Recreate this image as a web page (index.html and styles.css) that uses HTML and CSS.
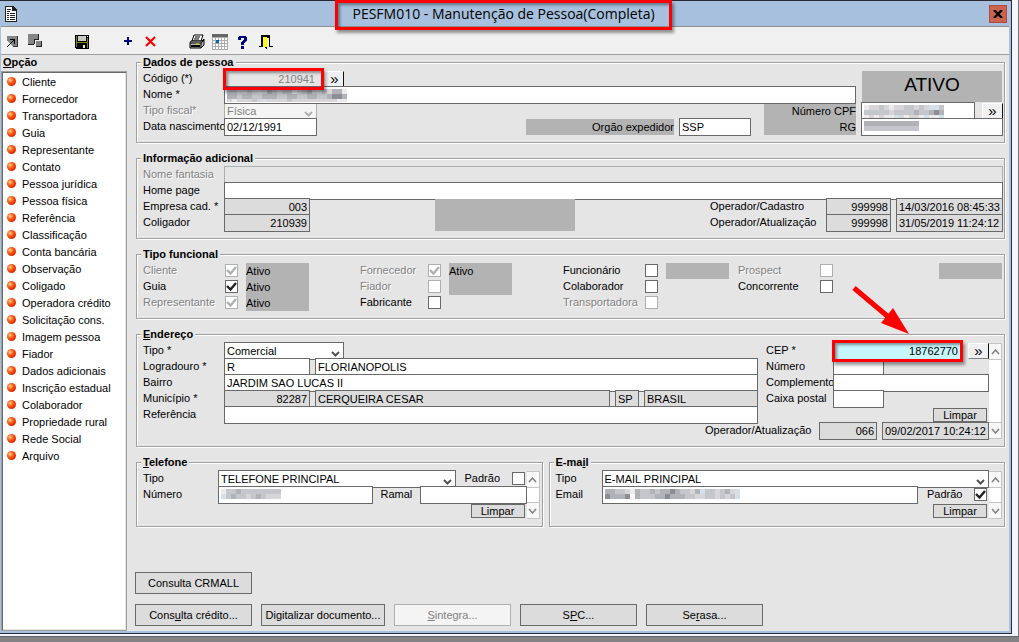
FILE: index.html
```html
<!DOCTYPE html>
<html lang="pt-BR">
<head>
    <meta charset="UTF-8">
    <meta name="viewport" content="width=device-width, initial-scale=1.0">
    <title>PESFM010 - Manutenção de Pessoa(Completa)</title>
    <link rel="stylesheet" href="styles.css">
</head>
<body>
<div class="desktop">
<div class="window">
    <header class="titlebar">
        <svg class="app-icon" width="14" height="16" viewBox="0 0 14 16" shape-rendering="crispEdges">
            <path d="M1 0h8l4 4v12H1z" fill="#222"/>
            <path d="M2 1h6v4h4v10H2z" fill="#fff"/>
            <path d="M3 3h4v1H3zM3 5h3v1H3zM3 7h2v1H3zM6 7h5v1H6zM3 9h2v1H3zM6 9h5v1H6zM3 11h2v1H3zM6 11h5v1H6zM3 13h2v1H3zM6 13h5v1H6z" fill="#222"/>
        </svg>
        <h1 class="title">PESFM010 - Manutenção de Pessoa(Completa)</h1>
        <button class="close" aria-label="Fechar">
            <svg width="10" height="8" viewBox="0 0 10 8"><path d="M1 0l8 8M9 0L1 8" stroke="#000" stroke-width="2.4"/></svg>
        </button>
    </header>

    <nav class="toolbar">
        <div class="tools">
            <button aria-label="Executar">
                <svg width="16" height="16" viewBox="0 0 16 16" shape-rendering="crispEdges">
                    <path d="M2 2h10v10H7L2 7z" fill="#858585"/>
                    <path d="M12 2h1v11H8v-1h4z" fill="#333"/>
                    <path d="M5 5h5v5H9V7H8v1H7v1H6v1H5v1H4v1H3v1H2v-1h1v-1h1v-1h1V9h1V8h1V7h1V6H5z" fill="#000"/>
                </svg>
            </button>
            <button aria-label="Janelas">
                <svg width="16" height="16" viewBox="0 0 16 16" shape-rendering="crispEdges">
                    <path d="M0 0h10v5H6v5H0z" fill="#858585"/>
                    <path d="M10 0h1v6H7v4H6V5h4zM0 10h6v1H0z" fill="#222"/>
                    <path d="M8 7h5v5H8z" fill="#858585"/>
                    <path d="M13 7h1v6H8v-1h5z" fill="#222"/>
                </svg>
            </button>
        </div>
        <div class="tools">
            <button aria-label="Salvar">
                <svg width="16" height="16" viewBox="0 0 16 16" shape-rendering="crispEdges">
                    <path d="M1 1h14v14H2l-1-1z" fill="#000"/>
                    <path d="M2 2h1v11H2zM13 4h1v10h-1zM3 8h10v1H3z" fill="#808000"/>
                    <path d="M4 2h8v5H4z" fill="#c8c8c8"/>
                    <path d="M13 2h1v1h-1z" fill="#fff"/>
                    <path d="M9 11h2v3H9z" fill="#e8e8e8"/>
                </svg>
            </button>
        </div>
        <div class="tools">
            <button aria-label="Novo">
                <svg width="16" height="16" viewBox="0 0 16 16" shape-rendering="crispEdges"><path d="M7 3h2v3h3v2H9v3H7V8H4V6h3z" fill="#000080"/></svg>
            </button>
            <button aria-label="Excluir">
                <svg width="16" height="16" viewBox="0 0 16 16"><path d="M3 3l9 9M12 3l-9 9" stroke="#f00" stroke-width="2.2"/></svg>
            </button>
        </div>
        <div class="tools">
            <button aria-label="Imprimir">
                <svg width="16" height="16" viewBox="0 0 16 16">
                    <path d="M5 1h9l-2 6H3z" fill="#fff" stroke="#000"/>
                    <path d="M6 3h5M5 5h5" stroke="#000"/>
                    <path d="M2 7h11l2-2v6l-3 3H1V9z" fill="#b8b8b8" stroke="#000"/>
                    <path d="M1 9h11v5M12 9l3-3" fill="none" stroke="#000"/>
                    <path d="M2 12h9" stroke="#000" stroke-width="2"/>
                    <path d="M7 10h3" stroke="#dd0"/>
                </svg>
            </button>
            <button aria-label="Calendário">
                <svg width="16" height="16" viewBox="0 0 16 16" shape-rendering="crispEdges">
                    <path d="M0 0h16v16H0z" fill="#aaa"/>
                    <path d="M0 0h16v3H0z" fill="#666"/>
                    <path d="M1 4h2v2H1zM4 4h2v2H4zM7 4h2v2H7zM10 4h2v2h-2zM13 4h2v2h-2zM1 7h2v2H1zM7 7h2v2H7zM10 7h2v2h-2zM13 7h2v2h-2zM1 10h2v2H1zM4 10h2v2H4zM7 10h2v2H7zM10 10h2v2h-2zM13 10h2v2h-2zM1 13h2v2H1zM4 13h2v2H4zM7 13h2v2H7zM10 13h2v2h-2zM13 13h2v2h-2z" fill="#fff"/>
                    <path d="M4 6h3v3H4z" fill="#06a"/>
                </svg>
            </button>
            <button aria-label="Ajuda">
                <svg width="16" height="16" viewBox="0 0 16 16" shape-rendering="crispEdges"><path d="M4 2h7v1h1v4h-1v1h-1v1H9v2H6V8h1V7h1V6h1V4H6v2H3V3h1zM6 12h3v3H6z" fill="#000080"/></svg>
            </button>
            <button aria-label="Sair">
                <svg width="16" height="16" viewBox="0 0 16 16" shape-rendering="crispEdges">
                    <path d="M3 1h9v11h3v1h-4V2H4v11H1v-1h2z" fill="#000"/>
                    <path d="M4 2h7v2H9v11H8v-1H7v-1H4z" fill="#000"/>
                    <path d="M5 3h4v9l-1 2V13H5z" fill="#ff0"/>
                </svg>
            </button>
        </div>
    </nav>

    <div class="client">
        <aside class="sidebar">
            <h2><u>O</u>pção</h2>
            <ul class="options">
                <li><a href="#">Cliente</a></li>
                <li><a href="#">Fornecedor</a></li>
                <li><a href="#">Transportadora</a></li>
                <li><a href="#">Guia</a></li>
                <li><a href="#">Representante</a></li>
                <li><a href="#">Contato</a></li>
                <li><a href="#">Pessoa jurídica</a></li>
                <li><a href="#">Pessoa física</a></li>
                <li><a href="#">Referência</a></li>
                <li><a href="#">Classificação</a></li>
                <li><a href="#">Conta bancária</a></li>
                <li><a href="#">Observação</a></li>
                <li><a href="#">Coligado</a></li>
                <li><a href="#">Operadora crédito</a></li>
                <li><a href="#">Solicitação cons.</a></li>
                <li><a href="#">Imagem pessoa</a></li>
                <li><a href="#">Fiador</a></li>
                <li><a href="#">Dados adicionais</a></li>
                <li><a href="#">Inscrição estadual</a></li>
                <li><a href="#">Colaborador</a></li>
                <li><a href="#">Propriedade rural</a></li>
                <li><a href="#">Rede Social</a></li>
                <li><a href="#">Arquivo</a></li>
            </ul>
        </aside>

        <main class="main">
            <fieldset>
                <legend><u>D</u>ados de pessoa</legend>
                <div class="split person">
                    <div class="grow">
                        <div class="row">
                            <label class="name" for="codigo">Código (*)</label>
                            <span class="marked w-key"><input id="codigo" class="num plain" value="210941" disabled></span>
                            <button class="more">»</button>
                        </div>
                        <div class="row">
                            <label class="name" for="nome">Nome *</label>
                            <span class="masked grow"><input id="nome"><svg class="mosaic" data-rows="ccddcdedbcdccfdcbdecdbbf,bbcbbccbbbccbbccbbccbaab,dfdddcdeddddcdddddddddff"></svg></span>
                        </div>
                        <div class="row">
                            <label class="name off" for="fiscal">Tipo fiscal*</label>
                            <select id="fiscal" class="w-date" disabled><option>Física</option></select>
                            <label class="tag right w-tag" for="cpf">Número CPF</label>
                        </div>
                        <div class="row">
                            <label class="name" for="nasc">Data nascimento</label>
                            <input id="nasc" class="w-date" value="02/12/1991">
                            <label class="tag right w-issuer" for="orgao">Orgão expedidor</label>
                            <input id="orgao" class="w-org" value="SSP">
                            <label class="tag w-tag" for="rg">RG</label>
                        </div>
                    </div>
                    <div class="documents">
                        <div class="status">ATIVO</div>
                        <div class="row">
                            <span class="masked w-cpf"><input id="cpf"><svg class="mosaic" data-rows="fddcdfddccdcdeec,cccccdccccbccbab,fdfdffedfddfeffe"></svg></span>
                            <button class="more wide">»</button>
                        </div>
                        <div class="row">
                            <span class="masked grow"><input id="rg"><svg class="mosaic" data-rows="bbbbbbbbbbb,ccccccccccc"></svg></span>
                        </div>
                    </div>
                </div>
            </fieldset>

            <fieldset>
                <legend>Informação adicional</legend>
                <div class="row">
                    <label class="name off" for="fantasia">Nome fantasia</label>
                    <input id="fantasia" class="grow" disabled>
                </div>
                <div class="row">
                    <label class="name" for="home">Home page</label>
                    <input id="home" class="grow">
                </div>
                <div class="split between">
                    <div>
                        <div class="row">
                            <label class="name" for="empresa">Empresa cad. *</label>
                            <input id="empresa" class="num w-code" value="003" readonly>
                        </div>
                        <div class="row">
                            <label class="name" for="coligador">Coligador</label>
                            <input id="coligador" class="num w-code" value="210939" readonly>
                        </div>
                    </div>
                    <div class="block logo-block"></div>
                    <div>
                        <div class="row spaced">
                            <label class="w-operator" for="opcad">Operador/Cadastro</label>
                            <input id="opcad" class="num w-user" value="999998" readonly>
                            <input class="w-stamp" value="14/03/2016 08:45:33" aria-label="Data do cadastro" readonly>
                        </div>
                        <div class="row spaced">
                            <label class="w-operator" for="opatu">Operador/Atualização</label>
                            <input id="opatu" class="num w-user" value="999998" readonly>
                            <input class="w-stamp" value="31/05/2019 11:24:12" aria-label="Data da atualização" readonly>
                        </div>
                    </div>
                </div>
            </fieldset>

            <fieldset>
                <legend>Tipo funcional</legend>
                <div class="split roles">
                    <div class="role">
                        <div class="checks">
                            <label class="off" for="r1">Cliente</label><input type="checkbox" id="r1" checked disabled>
                            <label for="r2">Guia</label><input type="checkbox" id="r2" checked>
                            <label class="off" for="r3">Representante</label><input type="checkbox" id="r3" checked disabled>
                        </div>
                        <div class="block"><p>Ativo</p><p>Ativo</p><p>Ativo</p></div>
                    </div>
                    <div class="role">
                        <div class="checks narrow">
                            <label class="off" for="r4">Fornecedor</label><input type="checkbox" id="r4" checked disabled>
                            <label class="off" for="r5">Fiador</label><input type="checkbox" id="r5" disabled>
                            <label for="r6">Fabricante</label><input type="checkbox" id="r6">
                        </div>
                        <div class="block"><p>Ativo</p><p></p></div>
                    </div>
                    <div class="role pair">
                        <div class="role">
                            <div class="checks">
                                <label for="r7">Funcionário</label><input type="checkbox" id="r7">
                                <label for="r8">Colaborador</label><input type="checkbox" id="r8">
                                <label class="off" for="r9">Transportadora</label><input type="checkbox" id="r9" disabled>
                            </div>
                            <div class="block"><p></p></div>
                        </div>
                        <div class="role grow">
                            <div class="checks">
                                <label class="off" for="r10">Prospect</label><input type="checkbox" id="r10" disabled>
                                <label for="r11">Concorrente</label><input type="checkbox" id="r11">
                            </div>
                            <div class="block right"><p></p></div>
                        </div>
                    </div>
                </div>
            </fieldset>

            <fieldset>
                <legend><u>E</u>ndereço</legend>
                <div class="split">
                    <div class="grow">
                        <div class="split address">
                            <div class="grow">
                                <div class="row">
                                    <label class="name" for="tipoend">Tipo *</label>
                                    <select id="tipoend" class="w-kind"><option>Comercial</option></select>
                                </div>
                                <div class="row spaced">
                                    <label class="name" for="logr">Logradouro *</label>
                                    <input id="logr" class="w-code" value="R">
                                    <input class="grow" value="FLORIANOPOLIS" aria-label="Nome do logradouro">
                                </div>
                                <div class="row">
                                    <label class="name" for="bairro">Bairro</label>
                                    <input id="bairro" class="grow" value="JARDIM SAO LUCAS II">
                                </div>
                                <div class="row spaced">
                                    <label class="name" for="mun">Município *</label>
                                    <input id="mun" class="num w-code" value="82287" readonly>
                                    <input class="grow" value="CERQUEIRA CESAR" aria-label="Nome do município" readonly>
                                    <input class="w-uf" value="SP" aria-label="UF" readonly>
                                    <input class="w-country" value="BRASIL" aria-label="País" readonly>
                                </div>
                                <div class="row">
                                    <label class="name" for="ref">Referência</label>
                                    <input id="ref" class="grow">
                                </div>
                            </div>
                            <div class="postal">
                                <div class="row">
                                    <label for="cep">CEP *</label>
                                    <span class="marked w-cep">
                                        <input id="cep" class="num focus" value="18762770">
                                        <svg class="arrow" width="62" height="54" viewBox="0 0 62 54">
                                            <path d="M3 3L41 35" stroke="#f00" stroke-width="5"/>
                                            <path d="M58 49L30 38l12-15z" fill="#f00"/>
                                        </svg>
                                    </span>
                                    <button class="more wide right">»</button>
                                </div>
                                <div class="row">
                                    <label for="num">Número</label>
                                    <input id="num" class="w-short">
                                </div>
                                <div class="row">
                                    <label for="compl">Complemento</label>
                                    <input id="compl" class="grow">
                                </div>
                                <div class="row">
                                    <label for="caixa">Caixa postal</label>
                                    <input id="caixa" class="w-short">
                                </div>
                                <div class="row"><button class="clear right">Limpar</button></div>
                            </div>
                        </div>
                        <div class="row spaced">
                            <label class="right w-address-op" for="opend">Operador/Atualização</label>
                            <input id="opend" class="num w-opend" value="066" readonly>
                            <input class="w-stamp" value="09/02/2017 10:24:12" aria-label="Data do endereço" readonly>
                        </div>
                    </div>
                    <div class="scroller">
                        <button aria-label="Endereço anterior"><svg width="9" height="6" viewBox="0 0 9 6"><path d="M1 5l3.5-4L8 5"/></svg></button>
                        <button aria-label="Próximo endereço"><svg width="9" height="6" viewBox="0 0 9 6"><path d="M1 1l3.5 4L8 1"/></svg></button>
                    </div>
                </div>
            </fieldset>

            <div class="contacts">
                <fieldset class="phone">
                    <legend><u>T</u>elefone</legend>
                    <div class="split">
                        <div class="grow">
                            <div class="row">
                                <label for="tipotel">Tipo</label>
                                <select id="tipotel" class="grow"><option>TELEFONE PRINCIPAL</option></select>
                                <label class="after" for="padtel">Padrão</label>
                                <input type="checkbox" id="padtel">
                            </div>
                            <div class="row">
                                <label for="numtel">Número</label>
                                <span class="masked grow"><input id="numtel"><svg class="mosaic" data-rows="fccbcccccccc,ecbccdcbcddd"></svg></span>
                                <label class="ext" for="ramal">Ramal</label>
                                <input id="ramal" class="w-stamp">
                            </div>
                            <div class="row"><button class="clear right">Limpar</button></div>
                        </div>
                        <div class="scroller">
                            <button aria-label="Telefone anterior"><svg width="9" height="6" viewBox="0 0 9 6"><path d="M1 5l3.5-4L8 5"/></svg></button>
                            <button aria-label="Próximo telefone"><svg width="9" height="6" viewBox="0 0 9 6"><path d="M1 1l3.5 4L8 1"/></svg></button>
                        </div>
                    </div>
                </fieldset>

                <fieldset class="email">
                    <legend>E-ma<u>i</u>l</legend>
                    <div class="split">
                        <div class="grow">
                            <div class="row">
                                <label for="tipomail">Tipo</label>
                                <select id="tipomail" class="grow"><option>E-MAIL PRINCIPAL</option></select>
                            </div>
                            <div class="row">
                                <label for="mail">Email</label>
                                <span class="masked grow"><input id="mail"><svg class="mosaic" data-rows="bbccdfbccbcbbabccdbeccdcbde,abbbagbcccbbabbbccddccdcdce"></svg></span>
                                <label class="after" for="padmail">Padrão</label>
                                <input type="checkbox" id="padmail" checked>
                            </div>
                            <div class="row"><button class="clear right">Limpar</button></div>
                        </div>
                        <div class="scroller">
                            <button aria-label="E-mail anterior"><svg width="9" height="6" viewBox="0 0 9 6"><path d="M1 5l3.5-4L8 5"/></svg></button>
                            <button aria-label="Próximo e-mail"><svg width="9" height="6" viewBox="0 0 9 6"><path d="M1 1l3.5 4L8 1"/></svg></button>
                        </div>
                    </div>
                </fieldset>
            </div>

            <div class="actions">
                <div class="action-row">
                    <button>Consulta CRMALL</button>
                </div>
                <div class="action-row">
                    <button>Cons<u>u</u>lta crédito...</button>
                    <button class="long">Di<u>g</u>italizar documento...</button>
                    <button disabled><u>S</u>integra...</button>
                    <button>S<u>P</u>C...</button>
                    <button>Se<u>r</u>asa...</button>
                </div>
            </div>
        </main>
    </div>
</div>
</div>

<script>
    // Draws the hidden personal data as blocks, one letter per 5px cell
    const shades = { a: '#8c8e96', b: '#b1b1b8', c: '#c5c5cc', d: '#d7d5d8', e: '#d3dfe9', f: '#eceaea', g: '#fdf8f3' };

    document.querySelectorAll('.mosaic').forEach(svg => {
        const rows = svg.dataset.rows.split(',');
        svg.setAttribute('width', rows[0].length * 5);
        svg.setAttribute('height', rows.length * 5);
        svg.innerHTML = rows.map((row, y) => [...row].map((cell, x) =>
            `<rect x="${x * 5}" y="${y * 5}" width="5" height="5" fill="${shades[cell]}"/>`
        ).join('')).join('');
    });
</script>
</body>
</html>
```
FILE: styles.css
```css
* {
    box-sizing: border-box;
}
body {
    margin: 0;
    min-height: 100vh;
    display: flex;
    flex-direction: column;
    background: #848284;
    color: #000;
    font-family: "Liberation Sans", Arial, sans-serif;
    font-size: 11px;
}
button, input, select {
    font: inherit;
    color: inherit;
    margin: 0;
    border-radius: 0;
}
.desktop {
    flex: 1;
    display: flex;
    margin-bottom: 5px;
    padding: 0 6px 2px 0;
    background: #f3f6fc;
    border-right: 1px solid #777;
    border-bottom: 1px solid #65636a;
}
.window {
    flex: 1;
    min-width: 0;
    display: flex;
    flex-direction: column;
    background: #a6c0dd;
    border-top: 1px solid #2a2a2e;
    border-right: 1px solid #2a2a38;
    border-bottom: 1px solid #2a2a38;
    padding: 0 2px 2px 1px;
}

/* title bar */
.titlebar {
    height: 26px;
    display: flex;
    align-items: center;
    justify-content: space-between;
    padding: 0 2px 0 3px;
    border-bottom: 1px solid #909090;
}
.title {
    margin: 0;
    position: relative;
    font-family: "Open Sans", "Noto Sans", sans-serif;
    font-size: 14px;
    font-weight: normal;
    line-height: 26px;
}
.title::after, .marked::after {
    content: "";
    position: absolute;
    border: 3px solid #f00;
    box-shadow: 2px 3px 3px rgba(0, 0, 0, 0.4), inset 2px 2px 3px rgba(0, 0, 0, 0.4);
    pointer-events: none;
    z-index: 3;
}
.title::after {
    inset: -1px -17px -3px -17px;
}
.close {
    width: 18px;
    height: 18px;
    padding: 0;
    display: flex;
    align-items: center;
    justify-content: center;
    background: #cb6351;
    border: 1px solid #b14a3c;
}

/* toolbar */
.toolbar {
    position: relative;
    height: 27px;
    display: flex;
    align-items: center;
    gap: 30px;
    padding: 2px 0 0 4px;
    background: #f0f0f0;
    box-shadow: 0 1px #a0a0a0;
}
.tools {
    display: flex;
    gap: 7px;
}
.tools button {
    display: flex;
    padding: 0;
    border: 0;
    background: none;
}

.client {
    flex: 1;
    display: flex;
    background: #e5e5e5;
}

/* option list */
.sidebar {
    width: 126px;
    display: flex;
    flex-direction: column;
}
.sidebar h2 {
    margin: 0;
    padding-left: 2px;
    font-size: 11px;
    line-height: 17px;
}
.options {
    flex: 1;
    margin: 0;
    padding: 1px 0 0;
    list-style: none;
    background: #fff;
    border: 1px solid #a0a0a0;
    box-shadow: inset 1px 1px #696969, inset -1px -1px #e3e3e3;
}
.options li {
    display: flex;
    align-items: center;
    gap: 6px;
    height: 17px;
    padding-left: 5px;
}
.options li::before {
    content: "";
    width: 9px;
    height: 9px;
    border-radius: 50%;
    background: radial-gradient(circle at 35% 35%, #ffe0a0 0, #ff7a30 25%, #f03000 60%, #a02000 100%);
}
.options a {
    color: #000;
    text-decoration: none;
}

/* form groups */
.main {
    flex: 1;
    min-width: 0;
    display: flex;
    flex-direction: column;
    padding: 0 4px 5px 8px;
}
fieldset {
    min-width: 0;
    margin: 0 0 7px 1px;
    padding: 0 1px 8px 6px;
    border: 1px solid #a0a0a0;
    box-shadow: 1px 1px #fff, inset 1px 1px #fff;
}
legend {
    margin-left: -2px;
    padding: 0 2px;
    background: #e5e5e5;
    font-weight: bold;
    line-height: 16px;
}
.split {
    display: flex;
}
.between {
    justify-content: space-between;
}
.grow {
    flex: 1;
    min-width: 0;
}
.right {
    margin-left: auto;
}
/* rows are 16px apart and the 18px fields share their borders */
.row {
    display: flex;
    align-items: flex-start;
    height: 16px;
}
.spaced {
    gap: 5px;
}
.row label, .checks label {
    line-height: 17px;
    white-space: nowrap;
}
.name {
    width: 81px;
}
.spaced .name {
    margin-right: -5px;
}
.off {
    color: #808080;
    text-shadow: 1px 1px #fff;
}
input, select {
    height: 18px;
    padding: 0 2px;
    background-color: #fff;
    border: 1px solid #696969;
    outline: none;
}
input[readonly] {
    background-color: #dcdcdc;
}
input:disabled, select:disabled {
    background-color: #e5e5e5;
    border-color: #acb0b0;
    color: #808080;
    opacity: 1;
}
select {
    appearance: none;
    padding-bottom: 1px;
    background-image: url("data:image/svg+xml,%3Csvg xmlns='http://www.w3.org/2000/svg' width='9' height='6'%3E%3Cpath d='M1 1l3.500 3.500L8 1' fill='none' stroke='%23505050' stroke-width='2'/%3E%3C/svg%3E");
    background-repeat: no-repeat;
    background-position: right 3px bottom 2px;
}
select:disabled {
    background-color: #f4f4f4;
    background-image: url("data:image/svg+xml,%3Csvg xmlns='http://www.w3.org/2000/svg' width='9' height='6'%3E%3Cpath d='M1 1l3.500 3.500L8 1' fill='none' stroke='%23b0b0b0' stroke-width='2'/%3E%3C/svg%3E");
}
.num {
    text-align: right;
}
input[type="checkbox"] {
    appearance: none;
    width: 13px;
    height: 13px;
    margin-top: 2px;
    padding: 0;
}
input[type="checkbox"]:disabled {
    background-color: #fff;
}
input[type="checkbox"]:checked {
    background-image: url("data:image/svg+xml,%3Csvg xmlns='http://www.w3.org/2000/svg' width='11' height='11'%3E%3Cpath d='M1 5l3.500 3.500L10 2' fill='none' stroke='%23202020' stroke-width='2.400'/%3E%3C/svg%3E");
}
input[type="checkbox"]:checked:disabled {
    background-image: url("data:image/svg+xml,%3Csvg xmlns='http://www.w3.org/2000/svg' width='11' height='11'%3E%3Cpath d='M1 5l3.500 3.500L10 2' fill='none' stroke='%23b0b0b0' stroke-width='2.400'/%3E%3C/svg%3E");
}

/* field widths */
.w-key { width: 98px; }
.w-date { width: 93px; }
.w-tag { width: 92px; }
.w-issuer { width: 148px; }
.w-org { width: 72px; }
.w-cpf { width: 114px; }
.w-code { width: 86px; }
.w-operator { width: 111px; }
.w-user { width: 65px; }
.w-stamp { width: 107px; }
.w-kind { width: 120px; }
.w-uf { width: 24px; }
.w-country { width: 114px; }
.w-cep { width: 128px; }
.w-short { width: 51px; }
.w-opend { width: 58px; }
.w-address-op { width: 109px; }

.marked, .masked {
    position: relative;
    display: flex;
    height: 18px;
}
.marked input, .masked input {
    width: 100%;
}
.marked::after {
    inset: -2px -2px -2px -1px;
}
input.plain {
    border-color: #e5e5e5;
    padding-right: 6px;
}
.focus {
    background-color: #c6f7fd;
}
.mosaic {
    position: absolute;
    left: 3px;
    top: 3px;
    max-height: 13px;
}
.arrow {
    position: absolute;
    left: 18px;
    top: -57px;
    z-index: 4;
}
.more {
    width: 19px;
    height: 16px;
    margin-top: 1px;
    margin-left: 3px;
    padding: 0;
    background: #f0f0f0;
    border: 1px solid #fff;
    border-right-color: #111;
    border-bottom-color: #808080;
    font-size: 15px;
    line-height: 10px;
}
.more.wide {
    width: 21px;
    margin-left: auto;
}

/* person */
.person {
    gap: 5px;
}
.documents {
    width: 142px;
}
.tag, .block, .status {
    background: #b3b3b3;
}
.tag {
    height: 16px;
    margin-top: 1px;
    text-align: right;
}
.w-issuer {
    margin-right: 5px;
}
.w-org {
    margin-right: 13px;
}
.status {
    height: 31px;
    margin: 1px 1px 0;
    font-size: 19px;
    line-height: 28px;
    text-align: center;
}
.logo-block {
    width: 140px;
    margin: 1px 10px -1px 0;
}

/* roles */
.roles {
    gap: 51px;
}
.role {
    display: flex;
    align-items: flex-start;
    gap: 8px;
}
.pair {
    flex: 1;
    gap: 9px;
}
.checks {
    display: grid;
    grid-template-columns: 82px 13px;
    grid-auto-rows: 16px;
}
.checks.narrow {
    grid-template-columns: 68px 13px;
}
.role .block {
    width: 63px;
    margin-top: 1px;
    margin-bottom: -1px;
}
.role .block.right {
    margin-right: 1px;
}
.block p {
    margin: 0;
    height: 16px;
    line-height: 17px;
}

/* address */
.address {
    gap: 8px;
}
.postal {
    width: 223px;
}
.postal label {
    width: 67px;
}
.clear {
    width: 54px;
    height: 14px;
    margin-top: 2px;
    margin-right: 2px;
    padding: 0;
    background: #dcdcdc;
    border: 1px solid #696969;
    line-height: 12px;
}
.scroller {
    width: 13px;
    display: flex;
    flex-direction: column;
    justify-content: space-between;
    margin: 1px 1px -1px 0;
    background: #fff;
    border: 1px solid #c4c4c4;
    border-left: 0;
}
.scroller button {
    height: 16px;
    padding: 0;
    display: flex;
    align-items: center;
    justify-content: center;
    background: #f8f8f8;
    border: 0;
    border-bottom: 1px solid #c4c4c4;
}
.scroller button + button {
    border-bottom: 0;
    border-top: 1px solid #c4c4c4;
}
.scroller path {
    fill: none;
    stroke: #808080;
    stroke-width: 1.5;
}

/* phone and e-mail */
.contacts {
    display: flex;
    gap: 5px;
}
.phone {
    flex: 406;
}
.email {
    flex: 457;
}
.phone label {
    width: 75px;
}
.email label {
    width: 46px;
}
.row .after {
    width: 47px;
    margin-left: 9px;
}
.row .ext {
    width: 39px;
    margin-left: 8px;
}
.contacts input[type="checkbox"] {
    margin-right: 2px;
}

/* bottom buttons */
.actions {
    margin-top: auto;
    display: flex;
    flex-direction: column;
    gap: 10px;
}
.action-row {
    display: flex;
    gap: 9px;
}
.action-row button {
    width: 117px;
    height: 22px;
    padding: 0;
    background: #dcdcdc;
    border: 1px solid #696969;
}
.action-row .long {
    width: 124px;
}
.action-row button:disabled {
    background: #f4f4f4;
    border-color: #acb0b0;
    color: #808080;
}
```
